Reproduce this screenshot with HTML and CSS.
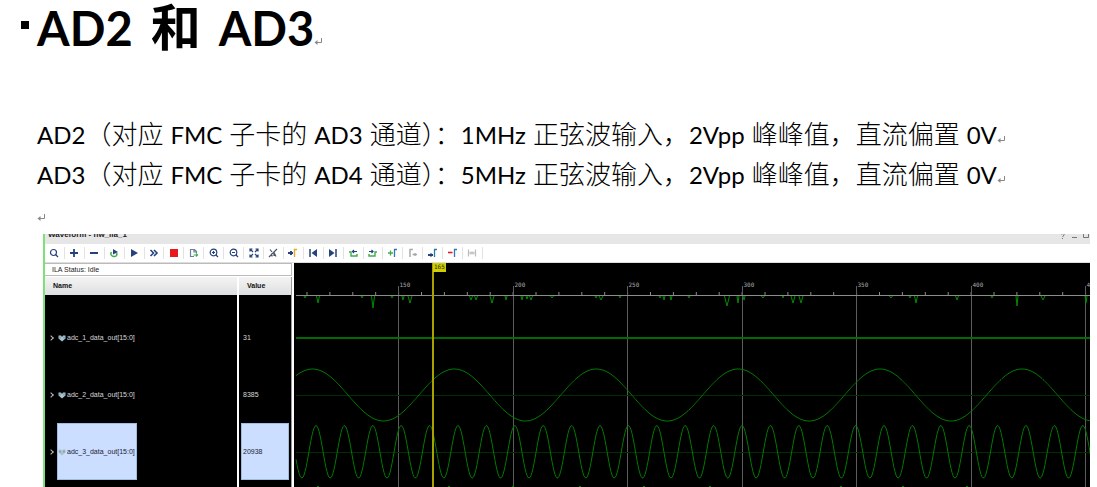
FILE: index.html
```
<!DOCTYPE html>
<html lang="zh-CN">
<head>
<meta charset="utf-8">
<title>AD2 和 AD3</title>
<link rel="stylesheet" href="styles.css">
</head>
<body>
<svg class="defs" width="0" height="0" aria-hidden="true">
  <symbol id="ret" viewBox="0 0 8 8"><path d="M7.500 0V4.500H2" fill="none" stroke="#888"/><path d="M3.500 2v5L.5 4.500z" fill="#888"/></symbol>
  <symbol id="bus" viewBox="0 0 8 8"><path d="M.5 1.500h2.500L4 3l1-1.500h2.500v3L4 7.500.5 4.500z" fill="#a9c4cc"/><path d="M2 2.500v2M6 2.500v2" stroke="#6b8d98"/></symbol>
</svg>
<main class="page">
  <h1 class="title"><span class="bullet"></span><span class="lat">AD2</span><span class="han">和</span><span class="lat">AD3</span><svg class="ret"><use href="#ret"/></svg></h1>
  <div class="notes">
    <p><span class="lat first">AD2</span>（对应<span class="lat">FMC</span>子卡的<span class="lat">AD3</span>通道）：<span class="lat after">1MHz</span>正弦波输入，<span class="lat after">2Vpp</span>峰峰值，直流偏置<span class="lat last">0V</span><svg class="ret"><use href="#ret"/></svg></p>
    <p><span class="lat first">AD3</span>（对应<span class="lat">FMC</span>子卡的<span class="lat">AD4</span>通道）：<span class="lat after">5MHz</span>正弦波输入，<span class="lat after">2Vpp</span>峰峰值，直流偏置<span class="lat last">0V</span><svg class="ret"><use href="#ret"/></svg></p>
    <p><svg class="ret"><use href="#ret"/></svg></p>
  </div>
  <section class="wave">
    <header class="bar"><h2>Waveform - hw_ila_1</h2>
      <svg class="win" width="30" height="10" fill="none" stroke="#777"><path d="M2 0q4-1 3 1L3.500 3M3.500 4v1M13 3.500h5M24.500 0v3.500h5V0"/></svg>
    </header>
    <div class="tools">
      <button aria-label="Search"><svg viewBox="0 0 10 10"><circle cx="4.500" cy="4.500" r="3"/><path d="M6.500 6.500 9 9"/></svg></button>
      <button aria-label="Add"><svg viewBox="0 0 10 10"><path d="M5 1v8M1 5h8" stroke-width="1.800"/></svg></button>
      <button aria-label="Remove"><svg viewBox="0 0 10 10"><path d="M1 5h8" stroke-width="2"/></svg></button>
      <button aria-label="Auto re-trigger"><svg viewBox="0 0 10 10"><path d="M2.500 4C1 6 2.500 8.500 5 8.500S8.500 6.500 7.500 5" stroke="#3fae49" stroke-width="1.500"/><path d="M4 1 9 4 4 6.500z" fill="#26427d" stroke="none"/></svg></button>
      <button aria-label="Run"><svg viewBox="0 0 10 10"><path d="M2 1 9 5 2 9z" fill="#26427d" stroke="none"/></svg></button>
      <button aria-label="Run immediately"><svg viewBox="0 0 10 10"><path d="m1.500 2 3 3-3 3m3.500-6 3 3-3 3" stroke-width="1.600"/></svg></button>
      <button aria-label="Stop"><svg viewBox="0 0 10 10"><path d="M1 1h8v8H1z" fill="#e8191c" stroke="none"/></svg></button>
      <button aria-label="Export"><svg viewBox="0 0 10 10"><path d="M5 8.500H1.500v-7h4L7.500 3.500V5M5 2v2h2" stroke="#6c819f"/><path d="M4.500 7h4M7 5.500 8.500 7 7 8.500" stroke="#3fae49"/></svg></button>
      <button aria-label="Zoom in"><svg viewBox="0 0 10 10"><circle cx="4.500" cy="4.500" r="3.300"/><path d="M7 7l2 2M3 4.500h3M4.500 3v3"/></svg></button>
      <button aria-label="Zoom out"><svg viewBox="0 0 10 10"><circle cx="4.500" cy="4.500" r="3.300"/><path d="M7 7l2 2M3 4.500h3"/></svg></button>
      <button aria-label="Zoom fit"><svg viewBox="0 0 10 10"><path d="M1 3.500V1h2.500M1 1l3 3M9 3.500V1H6.500M9 1 6 4M1 6.500V9h2.500M1 9l3-3M9 6.500V9H6.500M9 9 6 6"/></svg></button>
      <button aria-label="Unlock zoom"><svg viewBox="0 0 10 10"><path d="M2 1.500 4 4M9 1 1 9M4 8.500V5M6 4.500 8 8.500M6 8V5" stroke="#4c5565"/></svg></button>
      <button aria-label="Go to cursor"><svg viewBox="0 0 10 10"><path d="M0 5h5M3 3v4" stroke-width="2"/><path d="M6.500 9V1.500H9" stroke="#dcae28" stroke-width="1.400"/></svg></button>
      <button aria-label="Previous"><svg viewBox="0 0 10 10"><path d="M2 1v8" stroke-width="1.500"/><path d="M9 1 3.500 5 9 9z" fill="#26427d" stroke="none"/></svg></button>
      <button aria-label="Next"><svg viewBox="0 0 10 10"><path d="M8 1v8" stroke-width="1.500"/><path d="M1 1 6.500 5 1 9z" fill="#26427d" stroke="none"/></svg></button>
      <button aria-label="Previous transition"><svg viewBox="0 0 10 10"><path d="M1 4h2v4h6V6" stroke="#3fae49" stroke-width="1.400"/><path d="M4 3.500h5M6 2 4.500 3.500 6 5"/></svg></button>
      <button aria-label="Next transition"><svg viewBox="0 0 10 10"><path d="M1 6v2h6V4h2" stroke="#3fae49" stroke-width="1.400"/><path d="M1 3.500h4M3.500 2 5 3.500 3.500 5"/></svg></button>
      <button aria-label="Add marker"><svg viewBox="0 0 10 10"><path d="M0 5h5M2.500 2.500v5" stroke="#3fae49" stroke-width="1.300"/><path d="M6.500 9V1.500H9" stroke="#2e78b0" stroke-width="1.300"/></svg></button>
      <button aria-label="Previous marker" disabled><svg viewBox="0 0 10 10"><path d="M2 9V1.500h3M4.500 6.500H9M7 5v3" stroke="#aaa" stroke-width="1.500"/></svg></button>
      <button aria-label="Next marker"><svg viewBox="0 0 10 10"><path d="M0 7h5M3 5.500v3" stroke-width="2"/><path d="M6.500 9V1.500H9" stroke="#2e78b0" stroke-width="1.300"/></svg></button>
      <button aria-label="Remove marker"><svg viewBox="0 0 10 10"><path d="M0 4.500h4.500" stroke="#e8191c" stroke-width="1.600"/><path d="M6.500 9V1.500H9" stroke="#2e78b0" stroke-width="1.300"/></svg></button>
      <button aria-label="Swap cursors" disabled><svg viewBox="0 0 10 10"><path d="M1.500 1.500v7M8.500 1.500v7M2 5h6M4 3.500v3M6 3.500v3" stroke="#bbb" stroke-width="1.200"/></svg></button>
    </div>
    <div class="body">
      <div class="side">
        <div class="status">ILA Status: Idle</div>
        <table class="signals">
          <thead><tr><th class="name">Name</th><th class="value">Value</th></tr></thead>
          <tbody>
            <tr class="top"><td class="name"><div class="cell"><i class="chev"></i><span class="tag"><svg class="bus"><use href="#bus"/></svg>adc_1_data_out[15:0]</span></div></td><td class="value"><div class="val">31</div></td></tr>
            <tr><td class="name"><div class="cell"><i class="chev"></i><span class="tag"><svg class="bus"><use href="#bus"/></svg>adc_2_data_out[15:0]</span></div></td><td class="value"><div class="val">8385</div></td></tr>
            <tr class="sel"><td class="name"><div class="cell"><i class="chev"></i><span class="tag"><svg class="bus"><use href="#bus"/></svg>adc_3_data_out[15:0]</span></div></td><td class="value"><div class="val">20938</div></td></tr>
          </tbody>
        </table>
      </div>
      <div class="plot"><svg id="plot" width="100%" height="100%"></svg></div>
    </div>
  </section>
</main>
<script src="plot.js"></script>
</body>
</html>
```
FILE: plot.js
```
const svg = document.getElementById('plot');
const END = 2400;

function add(tag, attrs, text) {
  const el = document.createElementNS('http://www.w3.org/2000/svg', tag);
  for (const key in attrs) el.setAttribute(key, attrs[key]);
  if (text) el.textContent = text;
  svg.appendChild(el);
}

function line(x1, y1, x2, y2, cls) {
  add('line', { x1, y1, x2, y2, class: cls });
}

function sine(peak, period, mid, amp) {
  const pts = [];
  for (let x = 2; x < END; x += 1) {
    pts.push(x + ',' + (mid - amp * Math.cos((x - peak) * 2 * Math.PI / period)).toFixed(1));
  }
  add('polyline', { points: pts.join(' '), class: 'trace' });
}

// Sample ruler: a minor tick every 10 samples, a labelled line every 50.
for (let i = 0; i < 90; i++) {
  const x = 13 + i * 22.9;
  line(x, 29, x, 32, 'tick');
}
for (let i = 0; i < 18; i++) {
  const x = Math.round(104 + i * 114.5) + 0.5;
  line(x, 23, x, 400, 'grid');
  add('text', { x: x + 1, y: 24, class: 'label' }, String(150 + i * 50));
}
line(2, 32.5, END, 32.5, 'axis');

// Activity spikes: x, width, depth.
const spikes = [[11,2,2],[24,3,7],[68,2,2],[79,3,12],[98,2,2],[109,2,4],[116,4,7],[177,3,4],[182,3,4],
  [198,4,7],[212,2,4],[228,2,4],[233,2,3],[237,3,4],[258,3,2],[302,2,2],[307,4,4],[326,2,2],[366,2,2],
  [370,2,4],[377,2,4],[395,2,2],[433,5,10],[444,2,7],[450,2,4],[469,3,2],[489,1,2],[499,4,7],[507,4,7],
  [597,3,2],[616,2,2],[622,3,7],[663,3,4],[698,2,2],[723,2,10],[749,4,4],[792,2,7]];
for (const [x, w, d] of spikes) {
  add('path', { d: `M${x - w / 2} 33l${w / 2} ${d} ${w / 2} ${-d}`, class: 'spike' });
}

line(2, 75, END, 75, 'flat');
line(2, 132.5, END, 132.5, 'base');
line(2, 189.5, END, 189.5, 'base');
sine(18.5, 141.9, 132, 26);
sine(22, 28.4, 188.8, 26.2);
for (const x of [24, 155, 219, 286, 350, 416, 547, 609, 673]) {
  add('path', { d: `M${x - 2} 225l2 -2 2 2`, class: 'trace' });
}

line(139, 0, 139, 400, 'cursor');
add('rect', { x: 139, y: 0, width: 13, height: 9, class: 'flag' });
add('text', { x: 140, y: 6, class: 'flag-label' }, '165');
```
FILE: styles.css
```
* { box-sizing: border-box; }
body { margin: 0; background: #fff; color: #000; }
.page { height: 100vh; overflow: hidden; display: flex; flex-direction: column; }
.defs { position: absolute; }
.ret { width: 8px; height: 8px; }

.title { margin: 0; height: 113px; padding-left: 21px; display: flex; align-items: baseline; font: 700 50px/48px "Noto Sans CJK SC", sans-serif; }
.title .lat { font-family: Lato, sans-serif; font-size: 47px; }
.title .han { margin: 0 18px; }
.bullet { width: 8px; height: 8px; margin: 0 8px 17px 0; background: #000; align-self: flex-start; margin-top: 21px; }

.notes { padding-left: 37px; font: 300 26px/40px "Noto Sans CJK SC", sans-serif; white-space: nowrap; }
.notes p { margin: 0; height: 40px; }
.notes p:last-child { height: 41px; }
.notes p:last-child .ret { margin-bottom: 2px; }
.notes .lat { margin: 0 7px; font: 400 24px/24px Lato, sans-serif; }
.notes .lat.first { margin: 0; }
.notes .lat.after { margin-left: 0; }
.notes .lat.last { margin-right: 0; }

.wave { flex: 1; min-height: 0; margin: 0 7px 0 43px; border-left: 2px solid #7fe07a; display: flex; flex-direction: column; font: 7px/10px "Liberation Sans", Arial, sans-serif; color: #222; }
.bar { height: 10px; flex: none; padding: 0 1px 0 3px; overflow: hidden; background: #e6e6e6; display: flex; justify-content: space-between; }
.bar h2 { margin: -4px 0 0; font-size: 8px; line-height: 10px; }
.tools { height: 18px; flex: none; width: 438px; display: flex; }
.tools button { flex: 1; min-width: 0; padding: 0; border: 0; border-right: 1px solid #e2e2e2; background: none; display: flex; align-items: center; justify-content: center; height: 12px; margin-top: 3px; }
.tools svg { width: 10px; height: 10px; fill: none; stroke: #26427d; stroke-width: 1.2; }
.body { flex: 1; min-height: 0; display: flex; border-top: 1px solid #ddd; }
.side { width: 247px; flex: none; background: #fff; }
.status { height: 13px; border: 1px solid #bbb; border-left: 0; padding: 0 7px; line-height: 12px; }
.signals { width: 100%; border-collapse: collapse; table-layout: fixed; margin-top: 1px; }
.signals th { height: 18px; padding: 0 8px; text-align: left; background: linear-gradient(#f4f4f4, #dedfe1); color: #111; }
.signals td { padding: 0; background: #000; color: #d8d8d8; }
.signals .name { width: 193px; border-right: 2px solid #fff; }
.signals .value { border-right: 1px solid #999; }
.signals .top td { padding-top: 14px; }
.signals tbody tr:last-child td { padding-bottom: 20px; }
.cell { display: flex; height: 57px; align-items: center; padding-left: 4px; }
.chev { width: 4px; height: 4px; margin-right: 4px; border: solid #bbb; border-width: 1px 1px 0 0; transform: rotate(45deg); }
.tag { height: 57px; width: 80px; display: flex; align-items: center; gap: 1px; white-space: nowrap; border: 1px solid transparent; }
.bus { width: 8px; height: 8px; flex: none; }
.val { height: 57px; margin: 0 2px; padding-left: 1px; line-height: 55px; border: 1px solid transparent; }
.sel .tag, .sel .val { background: #ccdeff; color: #223; border-color: #9dbce0; }

.plot { flex: 1; min-width: 0; background: #000; margin-left: 2px; overflow: hidden; }
.plot svg { display: block; }
.tick, .axis { stroke: #8c8c8c; }
.grid { stroke: #5c5c5c; }
.label { fill: #aaa; font: 6px "DejaVu Sans Mono", monospace; }
.spike { fill: none; stroke: #008c00; }
.flat { stroke: #006b00; stroke-width: 2; }
.base { stroke: #003000; }
.trace { fill: none; stroke: #007a00; }
.cursor { stroke: #a8a200; stroke-width: 2; }
.flag { fill: #d2cf00; }
.flag-label { fill: #222; font: 6px "DejaVu Sans Mono", monospace; }
```
